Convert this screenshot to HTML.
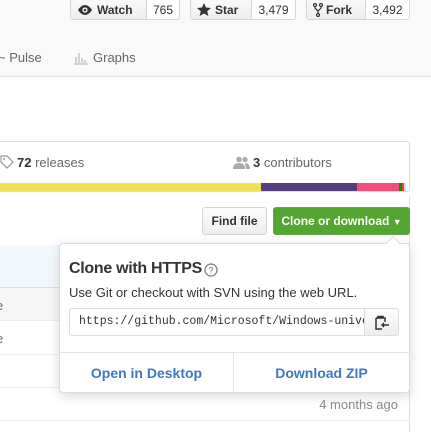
<!DOCTYPE html>
<html><head><meta charset="utf-8"><style>
*{box-sizing:border-box;margin:0;padding:0}
body{width:431px;height:432px;overflow:hidden;background:#fff;font-family:"Liberation Sans",sans-serif;color:#333;position:relative;font-size:13px}
.abs{position:absolute}
.hdr{left:0;top:0;width:431px;height:77px;background:#f9f9f9;border-bottom:1px solid #e5e5e5}
.btn{position:absolute;top:-6px;height:26px;border:1px solid #d5d5d5;border-radius:3px;background:#fff;display:flex;font-weight:bold;font-size:12px}
.btn .l{background:linear-gradient(#fcfcfc,#eee);border-right:1px solid #d5d5d5;display:flex;align-items:center;padding-left:6px;padding-top:5px}
.btn .c{display:flex;align-items:center;justify-content:center;flex:1;font-weight:normal;color:#333;padding-top:5px}
.nav{top:50px;font-size:13px;color:#666}
.stats{left:-5px;top:141px;width:415px;height:51px;border:1px solid #ddd;border-radius:3px;overflow:hidden}
.bar{position:absolute;top:183px;height:8px}
.g{color:#666}
</style></head><body>
<div class="abs hdr"></div>
<div class="btn" style="left:70px;width:110px"><div class="l" style="width:76px"><svg width="16" height="12" viewBox="0 0 16 12" style="margin-right:4px"><path d="M8 1C4 1 1 6 1 6s3 5 7 5 7-5 7-5-3-5-7-5z" fill="#333"/><circle cx="8" cy="6" r="2.6" fill="#fff"/><circle cx="8" cy="6" r="1.3" fill="#333"/></svg>Watch</div><div class="c">765</div></div>
<div class="btn" style="left:190px;width:106px"><div class="l" style="width:61px"><svg width="14" height="13" viewBox="0 0 14 13" style="margin-right:4px"><path d="M7 0l2 4.5 5 .5-3.8 3.3 1.2 4.7L7 10.5 2.6 13l1.2-4.7L0 5l5-.5z" fill="#333"/></svg>Star</div><div class="c">3,479</div></div>
<div class="btn" style="left:306px;width:104px"><div class="l" style="width:59px"><svg width="10" height="14" viewBox="0 0 10 14" style="margin-right:3px"><circle cx="2" cy="2" r="1.5" fill="none" stroke="#333" stroke-width="1.2"/><circle cx="8" cy="2" r="1.5" fill="none" stroke="#333" stroke-width="1.2"/><circle cx="5" cy="12" r="1.5" fill="none" stroke="#333" stroke-width="1.2"/><path d="M2 3.5v1.5l3 3 3-3V3.5M5 8v2.5" fill="none" stroke="#333" stroke-width="1.2"/></svg>Fork</div><div class="c">3,492</div></div>
<div class="abs nav" style="left:-2px">~ Pulse</div>
<svg class="abs" style="left:73px;top:51px" width="16" height="14" viewBox="0 0 16 14"><path d="M1 13h14M3 12V6M6 12V2M9 12V7M12 12V9" stroke="#bbb" stroke-width="1.3"/></svg>
<div class="abs nav" style="left:93px">Graphs</div>
<div class="abs stats"></div>
<svg class="abs" style="left:0;top:155px" width="14" height="14" viewBox="0 0 14 14"><path d="M1 1h6l6 6-6 6-6-6z" fill="none" stroke="#999" stroke-width="1.2"/><circle cx="4" cy="4" r="1" fill="#999"/></svg>
<div class="abs" style="left:17px;top:155px"><b style="color:#333">72</b> <span class="g">releases</span></div>
<svg class="abs" style="left:233px;top:156px" width="17" height="13" viewBox="0 0 17 13"><circle cx="6" cy="3.5" r="2.8" fill="#aaa"/><path d="M0 13c0-4 2-6 6-6s6 2 6 6z" fill="#aaa"/><circle cx="12" cy="3.5" r="2.6" fill="#aaa"/><path d="M12 7c3 0 5 2 5 6h-4z" fill="#aaa"/></svg>
<div class="abs" style="left:253px;top:155px"><b style="color:#333">3</b> <span class="g">contributors</span></div>
<div class="bar" style="left:0;width:261px;background:#f1e05a"></div>
<div class="bar" style="left:261px;width:96px;background:#563d7c"></div>
<div class="bar" style="left:357px;width:42px;background:#f34b7d"></div>
<div class="bar" style="left:399px;width:3px;background:#178600"></div>
<div class="bar" style="left:402px;width:2px;background:#e34c26"></div>
<div class="bar" style="left:404px;width:2px;background:#ddd"></div>
<div class="abs" style="left:409px;top:196px;width:1px;height:236px;background:#ddd"></div>
<div class="abs" style="left:202px;top:207px;width:65px;height:28px;border:1px solid #d5d5d5;border-radius:3px;background:linear-gradient(#fcfcfc,#eee);font-weight:bold;font-size:12px;text-align:center;line-height:26px">Find file</div>
<div class="abs" style="left:273px;top:207px;width:137px;height:28px;border:1px solid #5ca941;border-radius:3px;background:#55a532;color:#fff;font-weight:bold;font-size:12px;text-align:center;line-height:26px">Clone or download <span style="font-size:9px">▼</span></div>
<div class="abs" style="left:0;top:245px;width:60px;height:43px;background:#f2f9fc;border-bottom:1px solid #c9e2ee"></div>
<div class="abs" style="left:0;top:288px;width:60px;height:33px;background:#f7f7f7;border-bottom:1px solid #eee"></div>
<div class="abs" style="left:0;top:354px;width:409px;height:1px;background:#eee"></div>
<div class="abs" style="left:0;top:387px;width:409px;height:1px;background:#eee"></div>
<div class="abs" style="left:0;top:420px;width:409px;height:1px;background:#eee"></div>
<div class="abs g" style="left:-4px;top:298px">e</div>
<div class="abs g" style="left:-4px;top:331px">e</div>
<div class="abs" style="left:59px;top:243px;width:351px;height:150px;background:#fff;border:1px solid #ddd;border-radius:4px;box-shadow:0 3px 12px rgba(0,0,0,.15)"></div>
<div class="abs" style="left:388px;top:238px;width:10px;height:10px;background:#fff;border-left:1px solid #ddd;border-top:1px solid #ddd;transform:rotate(45deg)"></div>
<div class="abs" style="left:69px;top:260px;font-size:16px;font-weight:bold;color:#333;letter-spacing:-0.3px">Clone with HTTPS</div>
<svg class="abs" style="left:204px;top:263px" width="14" height="14" viewBox="0 0 14 14"><circle cx="7" cy="7" r="6" fill="none" stroke="#777" stroke-width="1.2"/><text x="7" y="10.5" font-size="9" text-anchor="middle" fill="#777" font-family="Liberation Sans">?</text></svg>
<div class="abs" style="left:69px;top:285px;font-size:13px">Use Git or checkout with SVN using the web URL.</div>
<div class="abs" style="left:69px;top:308px;width:330px;height:28px;border:1px solid #ddd;border-radius:3px;overflow:hidden">
<div style="position:absolute;left:0;top:0;width:294px;height:26px;padding-left:9px;font-family:'Liberation Mono',monospace;font-size:11.5px;line-height:26px;white-space:nowrap;overflow:hidden">https://github.com/Microsoft/Windows-universal</div>
<div style="position:absolute;left:294px;top:0;width:35px;height:26px;border-left:1px solid #ddd;background:linear-gradient(#fcfcfc,#eee)"><svg style="margin:6px 0 0 10px" width="14" height="15" viewBox="0 0 14 15"><path d="M1 3h9v4M1 3v11h6M3 3V1.5h5V3" fill="none" stroke="#333" stroke-width="1.5"/><path d="M7 10h7M9 8l-2 2 2 2" fill="none" stroke="#333" stroke-width="1.5"/></svg></div></div>
<div class="abs" style="left:60px;top:352px;width:349px;height:1px;background:#e5e5e5"></div>
<div class="abs" style="left:233px;top:353px;width:1px;height:39px;background:#e5e5e5"></div>
<div class="abs" style="left:60px;top:365px;width:173px;text-align:center;color:#4078c0;font-weight:bold;font-size:14px">Open in Desktop</div>
<div class="abs" style="left:234px;top:365px;width:175px;text-align:center;color:#4078c0;font-weight:bold;font-size:14px">Download ZIP</div>
<div class="abs" style="left:300px;top:397px;width:98px;text-align:right;color:#888;font-size:13px">4 months ago</div>
</body></html>
